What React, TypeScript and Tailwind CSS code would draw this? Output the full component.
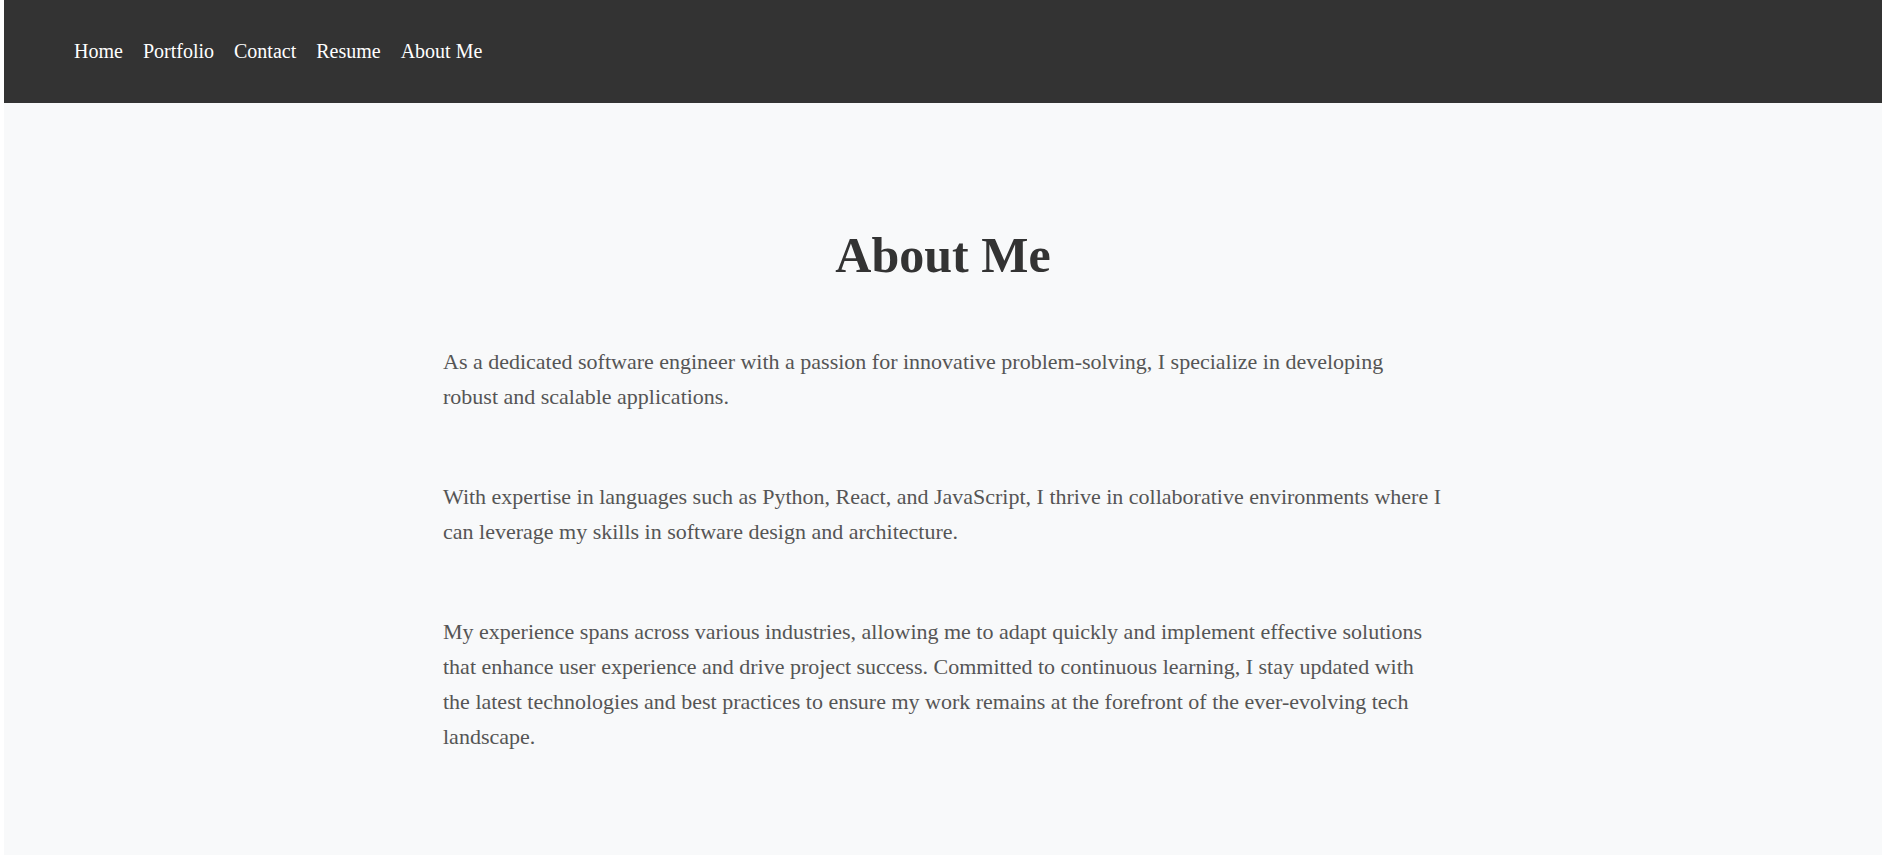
export default function App() {
  return (
    <div className="min-h-screen bg-white pl-[4px] pb-[7px]" style={{ fontFamily: '"Liberation Serif", "Times New Roman", serif' }}>
      <div className="min-h-[855px] bg-[#f8f9fa]">
        {/* Top navigation */}
        <nav className="h-[103px] bg-[#333333] flex items-center pl-[70px] pb-[2px]">
          <ul className="flex items-center gap-[20px] text-[20px] text-white">
            <li><a href="#home">Home</a></li>
            <li><a href="#portfolio">Portfolio</a></li>
            <li><a href="#contact">Contact</a></li>
            <li><a href="#resume">Resume</a></li>
            <li><a href="#about">About Me</a></li>
          </ul>
        </nav>

        {/* About section */}
        <main className="max-w-[1000px] mx-auto pt-[124px] pb-16">
          <h1 className="text-center text-[50px] font-bold text-[#333333] leading-[57px]">About Me</h1>
          <div className="mt-[60px] flex flex-col gap-[65px] text-[22px] leading-[35px] text-[#555555]">
            <p>
              As a dedicated software engineer with a passion for innovative problem-solving, I specialize in developing
              robust and scalable applications.
            </p>
            <p>
              With expertise in languages such as Python, React, and JavaScript, I thrive in collaborative environments where I
              can leverage my skills in software design and architecture.
            </p>
            <p>
              My experience spans across various industries, allowing me to adapt quickly and implement effective solutions
              that enhance user experience and drive project success. Committed to continuous learning, I stay updated with
              the latest technologies and best practices to ensure my work remains at the forefront of the ever-evolving tech
              landscape.
            </p>
          </div>
        </main>
      </div>
    </div>
  );
}
